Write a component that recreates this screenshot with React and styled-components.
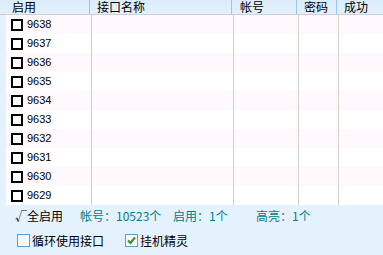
import React from "react";
import styled, { createGlobalStyle } from "styled-components";

const Global = createGlobalStyle`
  html, body { margin: 0; padding: 0; background: #e4f2fe; overflow: hidden; }
  #root { width: 383px; height: 255px; }
`;

const CJK = `"Noto Sans CJK SC", "Liberation Sans", sans-serif`;

const Frame = styled.div`
  width: 383px;
  height: 255px;
  display: flex;
  flex-direction: column;
  background: #e4f2fe;
  font-family: ${CJK};
  font-size: 12px;
  color: #000;
  overflow: hidden;
`;

const HeaderRow = styled.div`
  display: grid;
  grid-template-columns: 90px 142px 65px 40px 1fr;
  height: 14px;
  border-bottom: 1px solid #cfcfcf;
  background: linear-gradient(#dbecfb, #e3f1fd);
`;

const HeadCell = styled.div`
  padding-left: ${(p) => p.$pad || 7}px;
  display: flex;
  align-items: center;
  height: 14px;
  line-height: 14px;
  border-right: 1px solid ${(p) => (p.$last ? "transparent" : "#9fc6ea")};
  white-space: nowrap;
`;

const Body = styled.div`
  display: flex;
  flex-direction: column;
  padding-left: 6px;
`;

const Row = styled.div`
  display: grid;
  grid-template-columns: 86px 142px 65px 40px 1fr;
  height: 19px;
  background: ${(p) => (p.$alt ? "#fff8fd" : "#ffffff")};
`;

const Cell = styled.div`
  border-right: 1px solid ${(p) => (p.$last ? "transparent" : "#d4d0c8")};
  border-bottom: 1px solid #d4d0c8;
  display: flex;
  align-items: center;
  box-sizing: border-box;
`;

const RowBox = styled.span`
  width: 12px;
  height: 12px;
  box-sizing: border-box;
  border: 2px solid #000;
  background: #fff;
  margin-left: 5px;
  margin-right: 4px;
  flex: none;
`;

const RowNum = styled.span`
  font-family: "Liberation Sans", sans-serif;
  font-size: 11px;
  line-height: 19px;
`;

const Footer = styled.div`
  flex: 1;
  display: flex;
  flex-direction: column;
  background: #e4f2fe;
`;

const InfoLine = styled.div`
  display: flex;
  align-items: center;
  height: 20px;
  padding-top: 1px;
  padding-left: 15px;
`;

const Info = styled.span`
  width: ${(p) => (p.$w ? `${p.$w}px` : "auto")};
  flex: none;
  color: ${(p) => (p.$teal ? "#008080" : "#000")};
  line-height: 18px;
  white-space: nowrap;
`;

const OptLine = styled.div`
  display: flex;
  align-items: center;
  height: 28px;
  padding-left: 17px;
`;

const Opt = styled.label`
  display: flex;
  align-items: center;
  width: ${(p) => p.$w}px;
  flex: none;
  white-space: nowrap;
`;

const Box = styled.span`
  width: 13px;
  height: 13px;
  box-sizing: border-box;
  border: 1px solid #5b9bd6;
  background: linear-gradient(135deg, #f3f7fb, #ffffff);
  margin-right: 2px;
  display: flex;
  align-items: center;
  justify-content: center;
  flex: none;
`;

const Check = () => (
  <svg width="11" height="11" viewBox="0 0 11 11">
    <path d="M2 5.5 L4.5 8 L9 2.5" fill="none" stroke="#2e9c28" strokeWidth="2.2" />
  </svg>
);

const rows = ["9638", "9637", "9636", "9635", "9634", "9633", "9632", "9631", "9630", "9629"];

export default function App() {
  return (
    <Frame>
      <Global />
      <HeaderRow>
        <HeadCell $pad={12}>启用</HeadCell>
        <HeadCell>接口名称</HeadCell>
        <HeadCell $pad={8}>帐号</HeadCell>
        <HeadCell>密码</HeadCell>
        <HeadCell $last>成功</HeadCell>
      </HeaderRow>
      <Body>
        {rows.map((n, i) => (
          <Row key={n} $alt={i % 2 === 0}>
            <Cell>
              <RowBox />
              <RowNum>{n}</RowNum>
            </Cell>
            <Cell />
            <Cell />
            <Cell />
            <Cell $last />
          </Row>
        ))}
      </Body>
      <Footer>
        <InfoLine>
          <Info $w={65}>√全启用</Info>
          <Info $w={93} $teal>帐号：10523个</Info>
          <Info $w={83} $teal>启用：1个</Info>
          <Info $teal>高亮：1个</Info>
        </InfoLine>
        <OptLine>
          <Opt $w={108}>
            <Box />
            循环使用接口
          </Opt>
          <Opt $w={80}>
            <Box>
              <Check />
            </Box>
            挂机精灵
          </Opt>
        </OptLine>
      </Footer>
    </Frame>
  );
}
